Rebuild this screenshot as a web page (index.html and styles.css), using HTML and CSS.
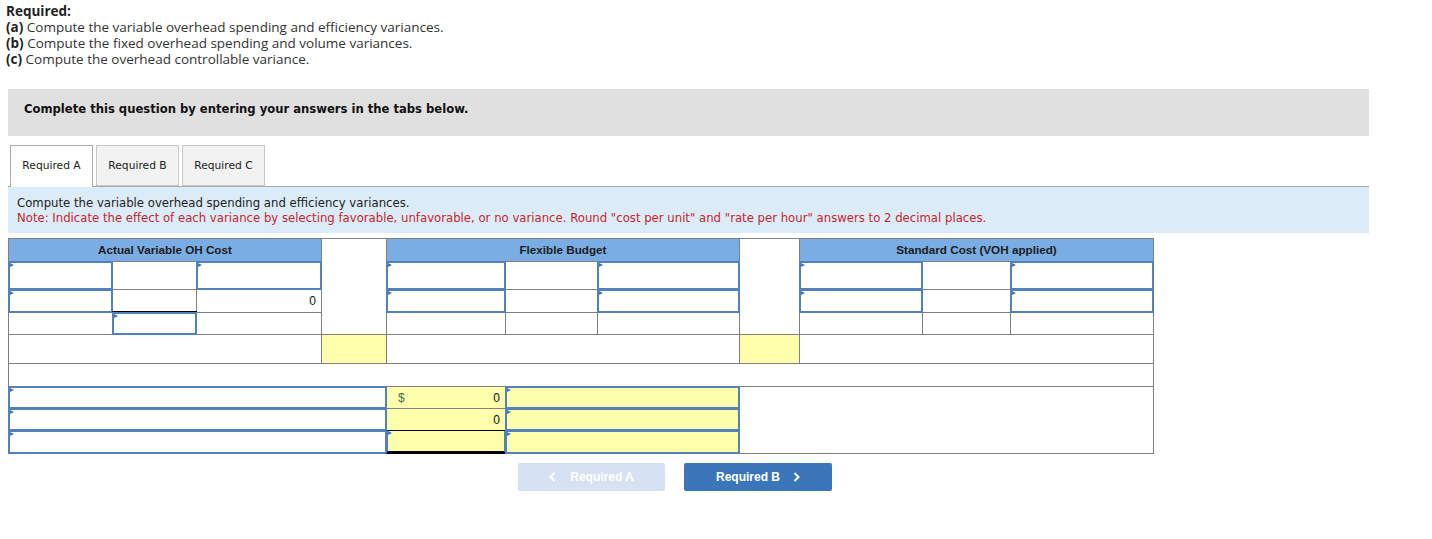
FILE: index.html
```html
<!DOCTYPE html>
<html>
<head>
<meta charset="utf-8">
<link rel="stylesheet" href="styles.css">
</head>
<body>
<div class="req">
  <div><b>Required:</b></div>
  <div><b>(a)</b> Compute the variable overhead spending and efficiency variances.</div>
  <div><b>(b)</b> Compute the fixed overhead spending and volume variances.</div>
  <div><b>(c)</b> Compute the overhead controllable variance.</div>
</div>

<div class="banner">Complete this question by entering your answers in the tabs below.</div>

<div class="tabs">
  <div class="tab active">Required A</div>
  <div class="tab">Required B</div>
  <div class="tab">Required C</div>
</div>

<div class="info">
  <div>Compute the variable overhead spending and efficiency variances.</div>
  <div class="note">Note: Indicate the effect of each variance by selecting favorable, unfavorable, or no variance. Round "cost per unit" and "rate per hour" answers to 2 decimal places.</div>
</div>

<div class="grid">
  <div class="hd s3">Actual Variable OH Cost</div>
  <div class="gap"></div>
  <div class="hd s3">Flexible Budget</div>
  <div class="gap"></div>
  <div class="hd s3">Standard Cost (VOH applied)</div>

  <div class="in"></div><div class="c"></div><div class="in"></div>
  <div class="in"></div><div class="c"></div><div class="in"></div>
  <div class="in"></div><div class="c"></div><div class="in"></div>

  <div class="in"></div><div class="c"></div><div class="c num">0</div>
  <div class="in"></div><div class="c"></div><div class="in"></div>
  <div class="in"></div><div class="c"></div><div class="in"></div>

  <div class="c"></div><div class="in topblk"></div><div class="c"></div>
  <div class="c"></div><div class="c"></div><div class="c"></div>
  <div class="c"></div><div class="c"></div><div class="c"></div>

  <div class="c s3"></div><div class="c y"></div><div class="c s3"></div><div class="c y"></div><div class="c s3"></div>

  <div class="c s11"></div>

  <div class="in s4"></div>
  <div class="c y num dollar"><span class="cur">$</span><span>0</span></div>
  <div class="in y s2"></div>
  <div class="c rest"></div>

  <div class="in s4"></div>
  <div class="c y num">0</div>
  <div class="in y s2"></div>

  <div class="in s4"></div>
  <div class="in y blk"></div>
  <div class="in y s2"></div>
</div>

<div class="nav">
  <div class="btn off"><svg class="chev l" width="7" height="10" viewBox="0 0 7 10"><polyline points="5.5,1 1.5,5 5.5,9" fill="none" stroke="#fff" stroke-width="2"/></svg>Required A</div>
  <div class="btn on">Required B<svg class="chev r" width="7" height="10" viewBox="0 0 7 10"><polyline points="1.5,1 5.5,5 1.5,9" fill="none" stroke="#fff" stroke-width="2"/></svg></div>
</div>
</body>
</html>
```

FILE: styles.css
```css
body {
  margin: 0;
  background: #fff;
  color: #222;
}

.req {
  height: 67px;
  box-sizing: border-box;
  padding: 3px 0 0 6px;
  font-family: "Open Sans", Lato, sans-serif;
  font-size: 13.5px;
  line-height: 16px;
  color: #333;
}
.req b { color: #222; font-weight: 700; }

.banner {
  margin: 22px 0 0 8px;
  width: 1361px;
  height: 47px;
  box-sizing: border-box;
  padding: 12px 0 0 16px;
  background: #e0e0e0;
  font-family: "DejaVu Sans Condensed", "DejaVu Sans", sans-serif;
  font-weight: bold;
  font-size: 12.9px;
  line-height: 16px;
  color: #111;
}

.tabs {
  display: flex;
  align-items: flex-start;
  gap: 3px;
  height: 41px;
  margin: 9px 0 0 10px;
  position: relative;
  z-index: 1;
}
.tab {
  width: 83px;
  height: 41px;
  box-sizing: border-box;
  border: 1px solid #c8c8c8;
  background: #f2f2f2;
  font-family: "DejaVu Sans", Verdana, sans-serif;
  font-size: 10.7px;
  line-height: 39px;
  text-align: center;
  color: #222;
}
.tab.active {
  background: #fff;
  border-color: #aaa;
  border-bottom: none;
  height: 42px;
}

.info {
  margin: 0 0 0 8px;
  width: 1361px;
  height: 47px;
  box-sizing: border-box;
  border-top: 1px solid #aaa;
  background: #dcebf8;
  padding: 9px 0 0 9px;
  font-family: "DejaVu Sans", Verdana, sans-serif;
  font-size: 11.7px;
  line-height: 15px;
  color: #222;
}
.info .note { color: #c4262e; }

.grid {
  margin: 5px 0 0 8px;
  width: 1146px;
  box-sizing: border-box;
  display: grid;
  grid-template-columns: 103px 83px 124px 64px 118px 91px 141px 59px 122px 87px 142px;
  grid-template-rows: 22px 27px 22px 21px 28px 22px 21px 21px 22px;
  gap: 1px;
  padding: 1px;
  background: #808080;
  font-family: "Liberation Sans", Arial, sans-serif;
  font-size: 12px;
}
.grid > div { background: #fff; position: relative; }
.hd {
  background: #79ade4 !important;
  font-weight: bold;
  font-size: 11.7px;
  line-height: 22px;
  text-align: center;
  color: #1c1c1c;
}
.gap { grid-row: span 4; }
.s2 { grid-column: span 2; }
.s3 { grid-column: span 3; }
.s4 { grid-column: span 4; }
.s11 { grid-column: span 11; }
.rest { grid-column: span 4; grid-row: span 3; }
.grid > .y { background: #ffffac; }

.in {
  margin: -1px;
  border: 2px solid #5281bc;
  z-index: 1;
}
.in::before {
  content: "";
  position: absolute;
  left: 0;
  top: 0;
  border-left: 4px solid #3c76c0;
  border-top: 2px solid transparent;
  border-bottom: 2px solid transparent;
}
.topblk { box-shadow: 0 -1px 0 #000; }
.blk {
  border-top: 1px solid #000;
  border-bottom: 3px solid #000;
}

.num {
  display: flex;
  align-items: center;
  justify-content: flex-end;
  padding-right: 5px;
  color: #111;
}
.dollar { justify-content: space-between; padding-left: 11px; }
.cur { color: #35705c; }

.nav {
  display: flex;
  gap: 19px;
  margin: 9px 0 0 518px;
}
.btn {
  width: 148px;
  height: 28px;
  border-radius: 2px;
  display: flex;
  align-items: center;
  justify-content: center;
  font-family: "Liberation Sans", Arial, sans-serif;
  font-weight: bold;
  font-size: 12px;
  color: #fff;
}
.btn.off { background: #d6e2f1; width: 147px; }
.btn.on { background: #3b76bb; }
.chev.l { margin-right: 14px; }
.chev.r { margin-left: 13px; }
```
